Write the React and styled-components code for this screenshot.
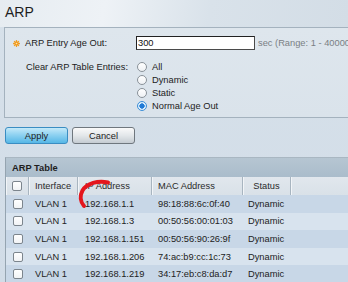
import React from "react";
import styled, { createGlobalStyle } from "styled-components";

const Global = createGlobalStyle`
  html, body { margin: 0; padding: 0; }
  body {
    width: 348px; height: 282px; overflow: hidden;
    background: #d3dee8;
    font-family: "Liberation Sans", Arial, sans-serif;
    color: #222;
  }
`;

const Page = styled.div`
  position: relative;
  width: 348px;
  height: 282px;
  overflow: hidden;
  background: linear-gradient(180deg, #d7e1ea 0%, #d1dce7 100%);
`;

const Header = styled.div`
  height: 27px;
  box-sizing: border-box;
  padding: 4px 0 0 5px;
  font-size: 14px;
  line-height: 16px;
  color: #1e1e1e;
  background: linear-gradient(100deg, #e6ecf1 0%, #eef2f6 30%, #d9e2ea 60%, #d3dde6 100%);
`;

const Panel = styled.div`
  margin-left: 4px;
  width: 360px;
  box-sizing: border-box;
  border: 1px solid #a4b2be;
  border-right: none;
  padding: 8px 0 5px 8px;
  background: linear-gradient(180deg, #dee6ed 0%, #dae3eb 100%);
  display: grid;
  grid-template-columns: 123px 1fr;
  row-gap: 10px;
  font-size: 9.3px;
`;

const Label = styled.div`
  display: flex;
  align-items: center;
  gap: 5px;
  height: ${(p) => p.$h || 14}px;
  padding-left: ${(p) => p.$indent || 0}px;
`;

const Field = styled.div`
  display: flex;
  align-items: center;
  height: 14px;
`;

const TextInput = styled.input`
  width: 119px;
  height: 14px;
  box-sizing: border-box;
  border: 1px solid #4a4a4a;
  border-top-color: #222;
  border-left-color: #222;
  background: #fff;
  padding: 0 0 0 1px;
  margin: 0;
  font-family: "Liberation Sans", Arial, sans-serif;
  font-size: 9.3px;
  color: #111;
  outline: none;
`;

const Hint = styled.span`
  margin-left: 3px;
  color: #7a7f84;
  white-space: nowrap;
`;

const RadioList = styled.div`
  display: flex;
  flex-direction: column;
`;

const RadioRow = styled.div`
  display: flex;
  align-items: center;
  height: 13px;
  gap: 5px;
  padding-left: 1px;
`;

const Radio = styled.span`
  width: 10px;
  height: 10px;
  box-sizing: border-box;
  border-radius: 50%;
  border: 1px solid ${(p) => (p.$on ? "#3d8fd8" : "#8a9299")};
  background: ${(p) =>
    p.$on
      ? "radial-gradient(circle, #1f7ad6 0 2.4px, #dbeefc 2.9px)"
      : "linear-gradient(180deg, #fff, #eef1f4)"};
`;

const Buttons = styled.div`
  display: flex;
  gap: 4px;
  margin: 9px 0 0 5px;
`;

const Button = styled.button`
  width: 63px;
  height: 17px;
  box-sizing: border-box;
  border-radius: 3px;
  margin: 0;
  padding: 0;
  font-family: "Liberation Sans", Arial, sans-serif;
  font-size: 9.3px;
  color: #1b1b1b;
  border: 1px solid ${(p) => (p.$primary ? "#3a8dc2" : "#6f777e")};
  background: ${(p) =>
    p.$primary
      ? "linear-gradient(180deg, #c4e9f9 0%, #8fd2f1 45%, #56b7e6 100%)"
      : "linear-gradient(180deg, #fafafa 0%, #e3e7ea 50%, #c5ccd2 100%)"};
`;

const Table = styled.div`
  margin: 13px 0 0 5px;
  width: 360px;
  border-left: 1px solid #95a4b0;
  border-top: 1px solid #a9b7c2;
  font-size: 9.3px;
`;

const TableTitle = styled.div`
  height: 19px;
  display: flex;
  align-items: center;
  padding-left: 6px;
  font-weight: bold;
  background: linear-gradient(180deg, #b6c6d2 0%, #aabccb 100%);
  color: #1d1d1d;
`;

const Row = styled.div`
  display: grid;
  grid-template-columns: 23px 49px 74px 91px 48px 1fr;
  height: ${(p) => p.$h}px;
  background: ${(p) => p.$bg};
`;

const HeadCell = styled.div`
  display: flex;
  align-items: center;
  justify-content: ${(p) => (p.$center ? "center" : "flex-start")};
  padding-left: ${(p) => (p.$center ? 0 : p.$pad ?? 6)}px;
  border-right: 1px solid #a8b5c0;
  box-shadow: inset 1px 0 0 #f2f5f8;
  color: #2a2a2a;
`;

const Cell = styled.div`
  display: flex;
  align-items: center;
  justify-content: ${(p) => (p.$center ? "center" : "flex-start")};
  padding-left: ${(p) => (p.$center ? 0 : p.$pad ?? 6)}px;
  color: #222;
  white-space: nowrap;
`;

const Check = styled.span`
  width: 10px;
  height: 10px;
  box-sizing: border-box;
  border: 1px solid #7c858d;
  border-radius: 2px;
  background: linear-gradient(180deg, #ffffff, #f1f3f5);
`;

const Overlay = styled.svg`
  position: absolute;
  left: 0;
  top: 0;
  pointer-events: none;
`;

const Star = () => (
  <svg width="7" height="7" viewBox="0 0 14 14">
    <g fill="#f29b1d">
      <circle cx="7" cy="7" r="4.2" />
      {[0, 45, 90, 135].map((a) => (
        <rect key={a} x="5.7" y="0" width="2.6" height="14" rx="1" transform={`rotate(${a} 7 7)`} />
      ))}
    </g>
    <circle cx="7" cy="7" r="1.6" fill="#fbe3b8" />
  </svg>
);

const rows = [
  ["VLAN 1", "192.168.1.1", "98:18:88:6c:0f:40", "Dynamic"],
  ["VLAN 1", "192.168.1.3", "00:50:56:00:01:03", "Dynamic"],
  ["VLAN 1", "192.168.1.151", "00:50:56:90:26:9f", "Dynamic"],
  ["VLAN 1", "192.168.1.206", "74:ac:b9:cc:1c:73", "Dynamic"],
  ["VLAN 1", "192.168.1.219", "34:17:eb:c8:da:d7", "Dynamic"],
];

const options = ["All", "Dynamic", "Static", "Normal Age Out"];

export default function App() {
  return (
    <Page>
      <Global />
      <Header>ARP</Header>
      <Panel>
        <Label>
          <Star />
          <span>ARP Entry Age Out:</span>
        </Label>
        <Field>
          <TextInput defaultValue="300" />
          <Hint>sec (Range: 1 - 40000, Default: 300)</Hint>
        </Field>
        <Label $h={13} $indent={13}>Clear ARP Table Entries:</Label>
        <RadioList>
          {options.map((o) => (
            <RadioRow key={o}>
              <Radio $on={o === "Normal Age Out"} />
              <span>{o}</span>
            </RadioRow>
          ))}
        </RadioList>
      </Panel>
      <Buttons>
        <Button $primary>Apply</Button>
        <Button>Cancel</Button>
      </Buttons>
      <Table>
        <TableTitle>ARP Table</TableTitle>
        <Row $h={18} $bg="linear-gradient(180deg, #e1e7ed, #d9e1e8)">
          <HeadCell $center>
            <Check />
          </HeadCell>
          <HeadCell>Interface</HeadCell>
          <HeadCell $pad={7}>IP Address</HeadCell>
          <HeadCell>MAC Address</HeadCell>
          <HeadCell $center>Status</HeadCell>
          <HeadCell />
        </Row>
        {rows.map((r, i) => (
          <Row key={i} $h={17.6} $bg={i % 2 === 0 ? "#c8d7e7" : "#d8e3ee"}>
            <Cell $center>
              <Check />
            </Cell>
            <Cell>{r[0]}</Cell>
            <Cell $pad={7}>{r[1]}</Cell>
            <Cell>{r[2]}</Cell>
            <Cell $pad={5}>{r[3]}</Cell>
            <Cell />
          </Row>
        ))}
      </Table>
      <Overlay width="348" height="282">
        <path
          d="M108 182.5 C 98 180.5, 87 183, 82.5 190.5 C 79.5 196, 80.5 202, 84 206"
          fill="none"
          stroke="#e4161d"
          strokeWidth="4"
          strokeLinecap="round"
        />
      </Overlay>
    </Page>
  );
}
